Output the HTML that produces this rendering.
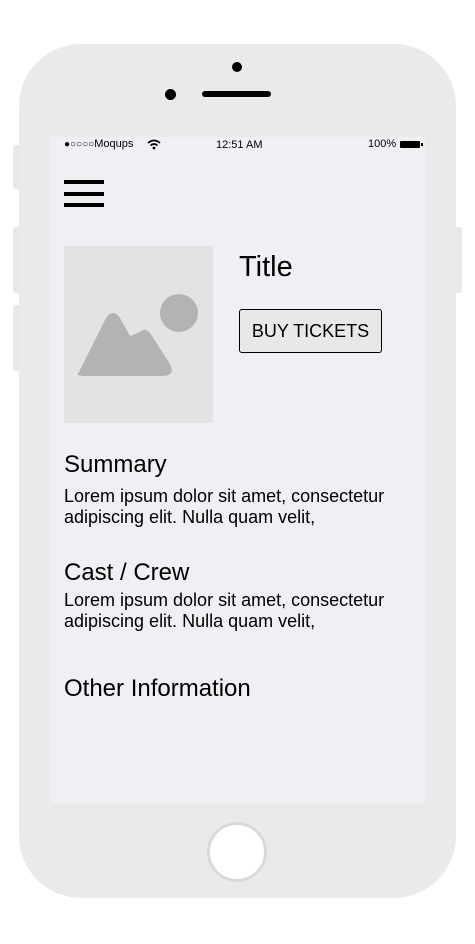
<!DOCTYPE html><html><head><style>
body{margin:0;width:475px;height:944px;background:#fff;position:relative;font-family:"Liberation Sans",Arial,sans-serif;overflow:hidden}
.a{position:absolute}
.btn{background:#e8e8e8;border-radius:3px}
</style></head><body>
<div class="a btn" style="left:13px;top:145px;width:8px;height:44px"></div>
<div class="a btn" style="left:13px;top:227px;width:8px;height:66px"></div>
<div class="a btn" style="left:13px;top:305px;width:8px;height:66px"></div>
<div class="a btn" style="left:454px;top:227px;width:8px;height:66px"></div>
<div class="a" style="left:19px;top:44px;width:437px;height:854px;background:#eaeaea;border-radius:62px"></div>
<div class="a" style="left:232px;top:62px;width:10px;height:10px;border-radius:50%;background:#000"></div>
<div class="a" style="left:165px;top:89px;width:11px;height:11px;border-radius:50%;background:#000"></div>
<div class="a" style="left:202px;top:91px;width:69px;height:6px;border-radius:3px;background:#000"></div>
<div class="a" style="left:50px;top:137px;width:375px;height:666px;background:#efeff4"></div>
<div class="a" style="left:64px;top:138px;font-size:10px;line-height:13px">●○○○○<span style="font-size:11px">Moqups</span></div>
<svg class="a" style="left:147px;top:139px" width="14" height="11"><path d="M1 4 Q7 -1 13 4" stroke="#000" stroke-width="1.6" fill="none"/><path d="M3.5 6.5 Q7 3.5 10.5 6.5" stroke="#000" stroke-width="1.6" fill="none"/><circle cx="7" cy="9" r="1.4"/></svg>
<div class="a" style="left:216px;top:139px;font-size:11px;line-height:13px">12:51 AM</div>
<div class="a" style="left:368px;top:138px;font-size:11px;line-height:12px">100%</div>
<div class="a" style="left:400px;top:141px;width:20px;height:7px;background:#000;border-radius:1px"></div>
<div class="a" style="left:421px;top:143px;width:2px;height:3px;background:#000"></div>
<div class="a" style="left:64px;top:180px;width:40px;height:4px;background:#000"></div>
<div class="a" style="left:64px;top:192px;width:40px;height:4px;background:#000"></div>
<div class="a" style="left:64px;top:203px;width:40px;height:4px;background:#000"></div>
<div class="a" style="left:64px;top:246px;width:149px;height:177px;background:#e3e3e3"></div>
<svg class="a" style="left:64px;top:246px" width="149" height="177"><circle cx="115" cy="67" r="19" fill="#b3b3b3"/><path d="M15 126 L42 72 Q49 62 56 72 L66 90 L76 86 Q82 80 88 90 L106 118 Q112 130 98 130 L22 130 Q10 130 15 126Z" fill="#b3b3b3"/></svg>
<div class="a" style="left:239px;top:250px;font-size:29px;line-height:34px">Title</div>
<div class="a" style="left:239px;top:309px;width:143px;height:44px;border:1px solid #000;border-radius:3px;box-sizing:border-box;background:#e8e8ea;font-size:18px;line-height:42px;text-align:center">BUY TICKETS</div>
<div class="a" style="left:64px;top:451px;font-size:24px;line-height:28px">Summary</div>
<div class="a" style="left:64px;top:486px;font-size:18px;line-height:21px">Lorem ipsum dolor sit amet, consectetur<br>adipiscing elit. Nulla quam velit,</div>
<div class="a" style="left:64px;top:559px;font-size:24px;line-height:28px">Cast / Crew</div>
<div class="a" style="left:64px;top:590px;font-size:18px;line-height:21px">Lorem ipsum dolor sit amet, consectetur<br>adipiscing elit. Nulla quam velit,</div>
<div class="a" style="left:64px;top:675px;font-size:24px;line-height:28px">Other Information</div>
<div class="a" style="left:207px;top:822px;width:54px;height:54px;border:3px solid #d9d9d9;border-radius:50%;background:#fff"></div>
</body></html>
